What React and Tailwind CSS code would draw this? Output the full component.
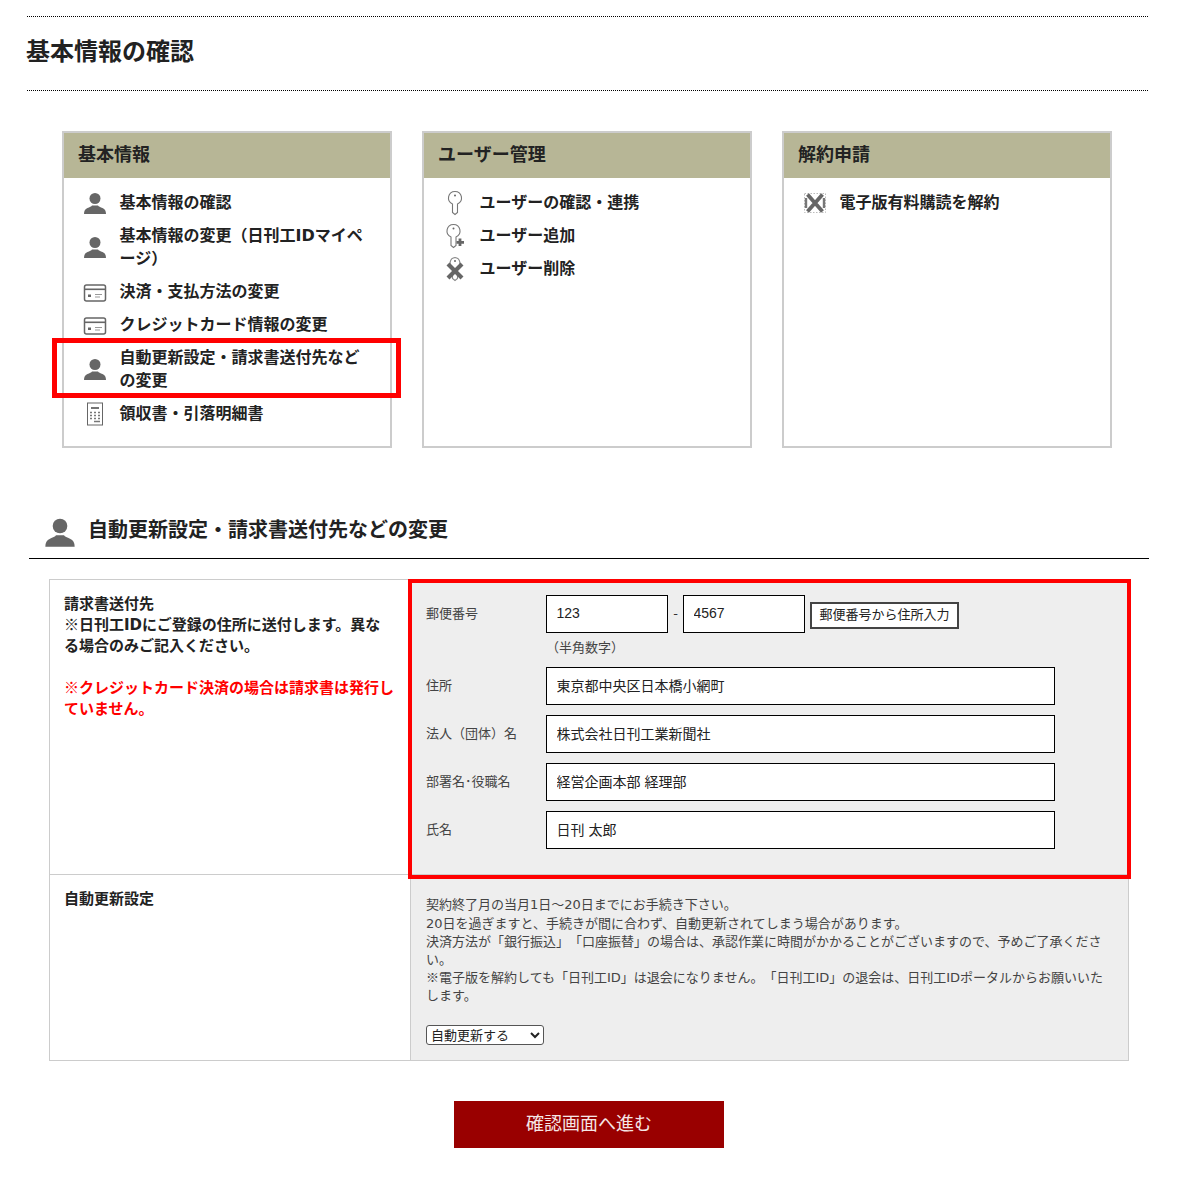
const UserIcon = ({ className = 'w-[24px] h-[24px]' }) => (
  <svg viewBox="0 0 24 24" className={className} fill="#666">
    <circle cx="12" cy="7.500" r="5.500" />
    <path d="M1 23c0-3 1-5 3.500-6 2-.8 4-1.500 4.500-2.500h6c.5 1 2.500 1.700 4.500 2.500C22 18 23 20 23 23z" />
  </svg>
);

const CardIcon = () => (
  <svg viewBox="0 0 24 18" className="w-[24px] h-[18px] mt-[2px]" fill="none">
    <rect x="1.500" y="1" width="21" height="16" rx="2" stroke="#666" strokeWidth="1.500" />
    <rect x="1.500" y="4.500" width="21" height="1.600" fill="#666" />
    <rect x="5" y="10.500" width="3" height="2.500" fill="#666" />
    <path d="M12 10.500h7M12 13h5" stroke="#999" strokeWidth="1.200" />
  </svg>
);

const CalcIcon = () => (
  <svg viewBox="0 0 18 24" className="w-[18px] h-[24px]" fill="none">
    <rect x="1.500" y="1" width="15" height="22" fill="#fff" stroke="#666" strokeWidth="1" />
    <path d="M5 6h8" stroke="#444" strokeWidth="1.500" />
    <path d="M4 10.500h2M8 10.500h2M12 10.500h2M4 13.500h2M8 13.500h2M12 13.500h2M4 16.500h2M8 16.500h2M12 16.500h2M8 19.500h6" stroke="#777" strokeWidth="1.500" />
  </svg>
);

const KeyIcon = ({ plus }) => (
  <svg viewBox="0 0 20 26" className="w-[20px] h-[26px]" fill="none">
    <g transform={plus ? 'translate(-1.500 0)' : 'translate(0 0)'}>
      <path d="M10 1.500a6.500 6.500 0 0 1 2.500 12.500v8.500L10 24.500l-2.500-2V14A6.500 6.500 0 0 1 10 1.500z" stroke="#777" strokeWidth="1.100" />
      <circle cx="10" cy="5.500" r="1" fill="#666" />
    </g>
    {plus && <path d="M15 15.500v7.500M11.500 19.300h7.500" stroke="#666" strokeWidth="2.800" />}
  </svg>
);

const KeyXIcon = () => (
  <svg viewBox="0 0 20 26" className="w-[20px] h-[26px]" fill="none">
    <path d="M10 1.500a5.500 5.500 0 0 1 2.500 10v11l-2.500 2-2.500-2v-11a5.500 5.500 0 0 1 2.500-10z" stroke="#888" strokeWidth="1.100" />
    <circle cx="10" cy="5" r="1" fill="#666" />
    <path d="M3 8l14 14M17 8L3 22" stroke="#666" strokeWidth="4.200" />
  </svg>
);

const CancelIcon = () => (
  <svg viewBox="0 0 24 24" className="w-[24px] h-[24px]" fill="none">
    <rect x="1.500" y="2.500" width="21" height="19" stroke="#bbb" strokeWidth="1" strokeDasharray="1.500 1.500" />
    <path d="M4.500 3.500l15 17M19.500 3.500l-15 17" stroke="#666" strokeWidth="3.800" />
    <path d="M3 7v10M21 7v10" stroke="#777" strokeWidth="2.400" />
  </svg>
);

// DejaVu has its own narrow reference mark, the reference shows the full-width one
const Mark = () => <span className="font-['Noto_Sans_CJK_JP',sans-serif] leading-[0]">※</span>;

const menus = [
  {
    title: '基本情報',
    items: [
      { icon: <UserIcon />, label: '基本情報の確認' },
      { icon: <UserIcon />, label: '基本情報の変更（日刊工IDマイページ）' },
      { icon: <CardIcon />, label: '決済・支払方法の変更' },
      { icon: <CardIcon />, label: 'クレジットカード情報の変更' },
      { icon: <UserIcon />, label: '自動更新設定・請求書送付先などの変更', active: true },
      { icon: <CalcIcon />, label: '領収書・引落明細書' },
    ],
  },
  {
    title: 'ユーザー管理',
    items: [
      { icon: <KeyIcon />, label: 'ユーザーの確認・連携' },
      { icon: <KeyIcon plus />, label: 'ユーザー追加' },
      { icon: <KeyXIcon />, label: 'ユーザー削除' },
    ],
  },
  {
    title: '解約申請',
    items: [{ icon: <CancelIcon />, label: '電子版有料購読を解約' }],
  },
];

const fields = [
  { label: '住所', value: '東京都中央区日本橋小網町' },
  { label: '法人（団体）名', value: '株式会社日刊工業新聞社' },
  { label: '部署名･役職名', value: '経営企画本部 経理部' },
  { label: '氏名', value: '日刊 太郎' },
];

function TextBox({ value, className }) {
  return (
    <input
      readOnly
      value={value}
      className={`h-[38px] border border-black bg-white pl-[9.500px] pr-[10px] pb-[3px] font-['Liberation_Sans','Noto_Sans_CJK_JP',sans-serif] text-[14px] text-[#222] outline-none ${className}`}
    />
  );
}

function MenuCard({ title, items }) {
  return (
    <div className="w-[330px] h-[317px] border-2 border-[#cccccc] bg-white">
      <h3 className="h-[45px] bg-[#b7b696] pl-[14px] text-[18px] leading-[43px] font-bold text-[#222]">{title}</h3>
      <ul className="flex flex-col gap-[10px] pt-[13px] pl-[19px] pr-[20px]">
        {items.map(({ icon, label, active }) => (
          <li key={label} className="relative flex items-center text-[16px] leading-[23px] font-bold text-[#222]">
            <span className="flex h-[23px] w-[24px] shrink-0 items-center justify-center">{icon}</span>
            <span className="ml-[12.500px] flex-1">{label}</span>
            {active && (
              <span className="absolute left-[-31px] right-[-31px] top-[-8px] bottom-[-6px] border-[5px] border-[#ff0000]" />
            )}
          </li>
        ))}
      </ul>
    </div>
  );
}

export default function App() {
  return (
    <div className="h-[1187px] bg-white pt-[16px] font-['DejaVu_Sans','Noto_Sans_CJK_JP',sans-serif] text-[#333] [text-spacing-trim:space-all]">
      {/* Page title */}
      <div className="mx-[27px] w-[1121px] h-[75px] border-y border-dotted border-black">
        <h1 className="ml-[-1px] text-[24px] leading-[70px] font-bold text-[#222]">基本情報の確認</h1>
      </div>

      {/* Menu cards */}
      <div className="mt-[40px] ml-[62px] flex gap-[30px]">
        {menus.map((menu) => (
          <MenuCard key={menu.title} {...menu} />
        ))}
      </div>

      {/* Section heading */}
      <div className="mt-[68px] ml-[29px] flex w-[1120px] h-[43px] items-start border-b border-black pl-[15px]">
        <UserIcon className="w-[32px] h-[32px]" />
        <h2 className="ml-[12px] pt-[1px] text-[20px] leading-[26px] font-bold text-[#222]">自動更新設定・請求書送付先などの変更</h2>
      </div>

      {/* Form table */}
      <div className="mt-[20px] ml-[49px] w-[1080px] border border-[#cccccc]">
        <div className="grid grid-cols-[360px_1fr] h-[295px] border-b border-[#cccccc]">
          <div className="pl-[14px] pr-[15px] pt-[14px] text-[15px] leading-[21px] font-bold text-[#222]">
            <p>請求書送付先</p>
            <p><Mark />日刊工IDにご登録の住所に送付します。異なる場合のみご記入ください。</p>
            <p className="mt-[21px] text-[#ff0000]"><Mark />クレジットカード決済の場合は請求書は発行していません。</p>
          </div>
          <div className="relative border-l border-[#cccccc] bg-[#eeeeee] pl-[15px] pt-[15px]">
            <div className="flex">
              <span className="w-[120px] pt-[10px] text-[13px] leading-[18px] text-[#444]">郵便番号</span>
              <TextBox value="123" className="w-[122px]" />
              <span className="w-[15px] pt-[10px] text-center text-[13px] leading-[18px]">-</span>
              <TextBox value="4567" className="w-[122px]" />
              <button className="ml-[5px] mt-[7px] h-[27px] w-[149px] border-2 border-[#444] bg-white pb-[1px] text-[13px] leading-[20px] text-[#222]">
                郵便番号から住所入力
              </button>
            </div>
            <p className="ml-[120px] mt-[6px] h-[28px] text-[13px] leading-[18px] text-[#444]">（半角数字）</p>
            <div className="flex flex-col gap-[10px]">
              {fields.map(({ label, value }) => (
                <div key={label} className="flex">
                  <span className="w-[120px] pt-[10px] text-[13px] leading-[18px] text-[#444]">{label}</span>
                  <TextBox value={value} className="w-[509px]" />
                </div>
              ))}
            </div>
            <span className="absolute left-[-3px] right-[-3px] top-[-1px] bottom-[-5px] border-[4px] border-[#ff0000]" />
          </div>
        </div>
        <div className="grid grid-cols-[360px_1fr] h-[185px]">
          <div className="pl-[14px] pr-[15px] pt-[14px] text-[15px] leading-[21px] font-bold text-[#222]">自動更新設定</div>
          <div className="border-l border-[#cccccc] bg-[#eeeeee] pl-[15px] pr-[16px] pt-[21px] text-[13px] leading-[18px] text-[#444]">
            <p>契約終了月の当月1日～20日までにお手続き下さい。</p>
            <p className="mt-[1px]">20日を過ぎますと、手続きが間に合わず、自動更新されてしまう場合があります。</p>
            <p>決済方法が「銀行振込」「口座振替」の場合は、承認作業に時間がかかることがございますので、予めご了承ください。</p>
            <p><Mark />電子版を解約しても「日刊工ID」は退会になりません。「日刊工ID」の退会は、日刊工IDポータルからお願いいたします。</p>
            <select className="mt-[20px] block h-[20px] w-[118px] rounded-[3px] border border-[#555] bg-white py-0 text-[13px] leading-[16px] text-[#222]">
              <option>自動更新する</option>
              <option>自動更新しない</option>
            </select>
          </div>
        </div>
      </div>

      {/* Submit */}
      <div className="mt-[40px] ml-[454px]">
        <button className="h-[47px] w-[270px] bg-[#990000] pb-[3px] text-[18px] text-[#f5e6e6]">確認画面へ進む</button>
      </div>
    </div>
  );
}
